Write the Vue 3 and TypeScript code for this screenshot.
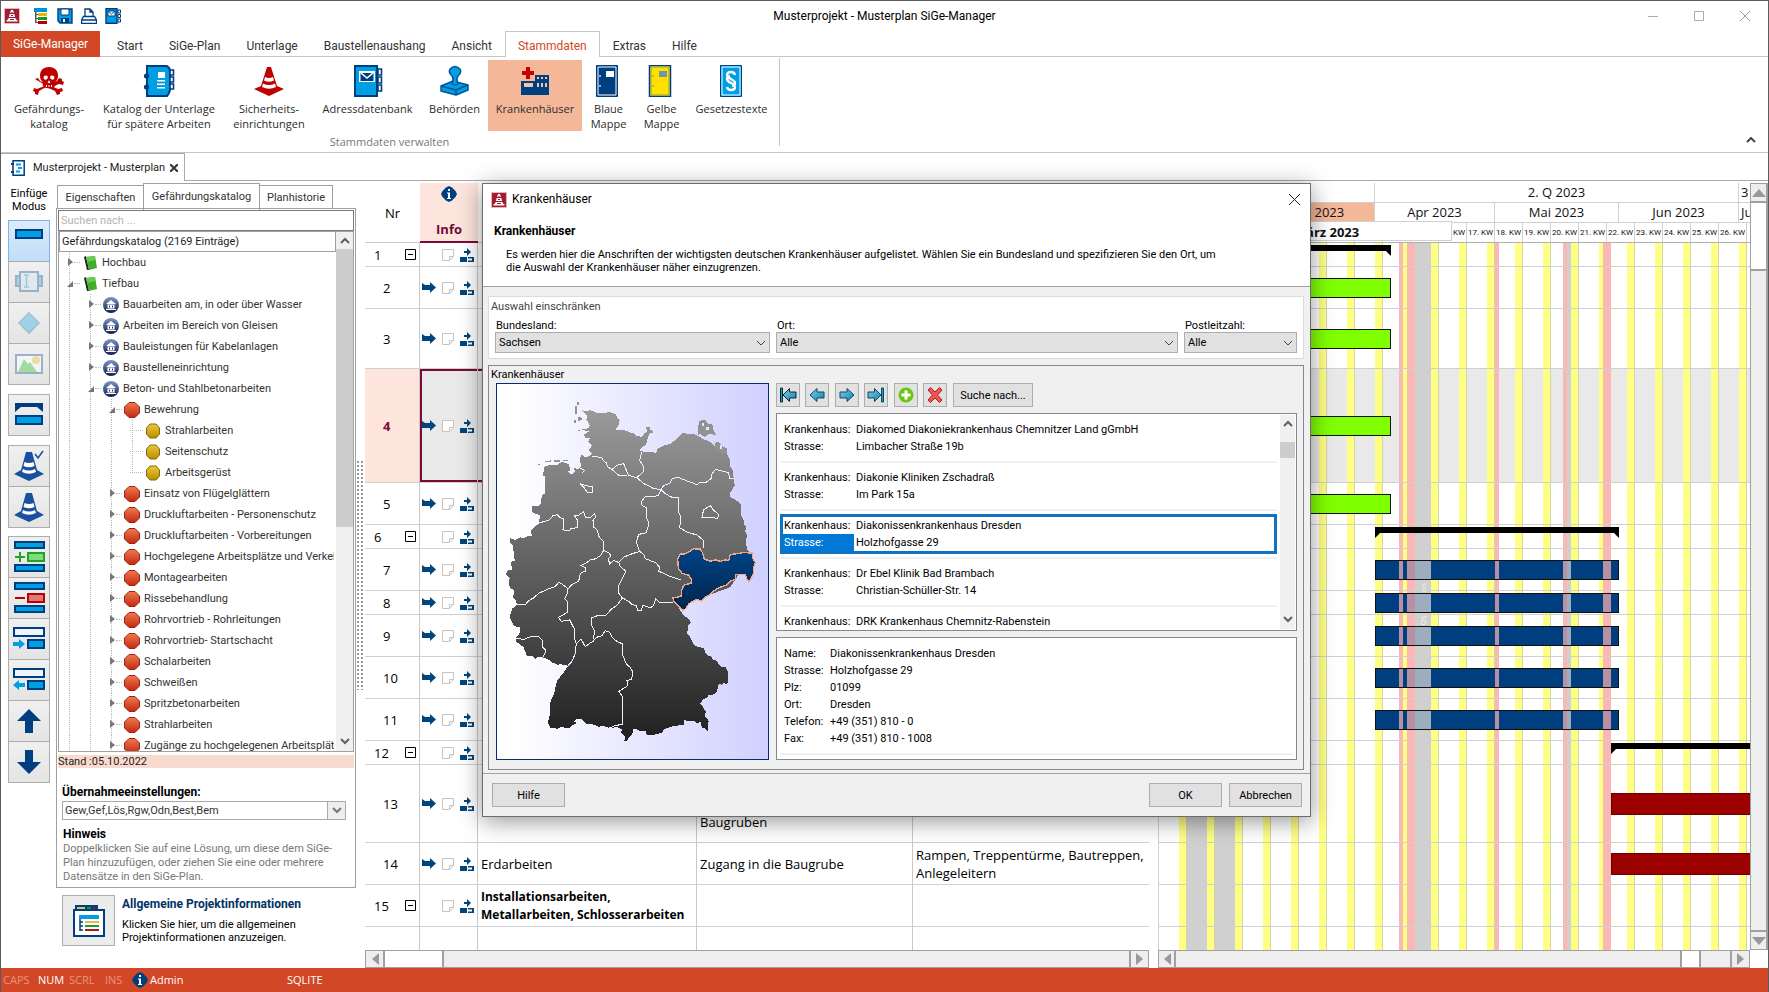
<script setup lang="ts">
import { ref } from 'vue'

interface RibbonItem { icon: string; lines: string[]; active?: boolean }
interface TreeNode { level: number; label: string; icon: string; open?: boolean; leaf?: boolean; last?: boolean }
interface PlanRow { nr: number; height: number; group?: boolean; selected?: boolean; cells?: string[]; low?: boolean; bar?: Bar }
interface Bar { kind: string; from: number; to: number }
interface Stripe { kind: string; day: number; days: number; text?: string }

const menu = ['Start', 'SiGe-Plan', 'Unterlage', 'Baustellenaushang', 'Ansicht', 'Stammdaten', 'Extras', 'Hilfe']
const activeMenu = ref('Stammdaten')

const ribbon: RibbonItem[] = [
  { icon: 'skull', lines: ['Gefährdungs-', 'katalog'] },
  { icon: 'catalog', lines: ['Katalog der Unterlage', 'für spätere Arbeiten'] },
  { icon: 'cone-red', lines: ['Sicherheits-', 'einrichtungen'] },
  { icon: 'address', lines: ['Adressdatenbank'] },
  { icon: 'stamp', lines: ['Behörden'] },
  { icon: 'hospital', lines: ['Krankenhäuser'], active: true },
  { icon: 'folder-blue', lines: ['Blaue', 'Mappe'] },
  { icon: 'folder-yellow', lines: ['Gelbe', 'Mappe'] },
  { icon: 'law', lines: ['Gesetzestexte'] },
]

const toolGroups: { icon: string; label: string; active?: boolean; dim?: boolean }[][] = [
  [
    { icon: 't-bar', label: 'Vorgang', active: true },
    { icon: 't-text', label: 'Text', dim: true },
    { icon: 't-diamond', label: 'Meilenstein', dim: true },
    { icon: 't-image', label: 'Bild', dim: true },
  ],
  [{ icon: 't-summary', label: 'Sammelvorgang' }],
  [{ icon: 't-cone-check', label: 'Maßnahme prüfen' }, { icon: 't-cone', label: 'Maßnahme' }],
  [
    { icon: 't-add', label: 'Zeile einfügen' },
    { icon: 't-remove', label: 'Zeile löschen' },
    { icon: 't-indent', label: 'Einrücken' },
    { icon: 't-outdent', label: 'Ausrücken' },
    { icon: 't-up', label: 'Nach oben' },
    { icon: 't-down', label: 'Nach unten' },
  ],
]

const panelTabs = ['Eigenschaften', 'Gefährdungskatalog', 'Planhistorie']
const panelTab = ref('Gefährdungskatalog')
const search = ref('')

const node = (level: number, label: string, icon: string, extra: Partial<TreeNode> = {}): TreeNode => ({ level, label, icon, ...extra })
const tree: TreeNode[] = [
  node(0, 'Hochbau', 'book'),
  node(0, 'Tiefbau', 'book', { open: true }),
  node(1, 'Bauarbeiten am, in oder über Wasser', 'house'),
  node(1, 'Arbeiten im Bereich von Gleisen', 'house'),
  node(1, 'Bauleistungen für Kabelanlagen', 'house'),
  node(1, 'Baustelleneinrichtung', 'house'),
  node(1, 'Beton- und Stahlbetonarbeiten', 'house', { open: true }),
  node(2, 'Bewehrung', 'octagon', { open: true }),
  node(3, 'Strahlarbeiten', 'coin', { leaf: true }),
  node(3, 'Seitenschutz', 'coin', { leaf: true }),
  node(3, 'Arbeitsgerüst', 'coin', { leaf: true, last: true }),
  ...[
    'Einsatz von Flügelglättern', 'Druckluftarbeiten - Personenschutz', 'Druckluftarbeiten - Vorbereitungen',
    'Hochgelegene Arbeitsplätze und Verkehrswege', 'Montagearbeiten', 'Rissebehandlung', 'Rohrvortrieb - Rohrleitungen',
    'Rohrvortrieb- Startschacht', 'Schalarbeiten', 'Schweißen', 'Spritzbetonarbeiten', 'Strahlarbeiten',
    'Zugänge zu hochgelegenen Arbeitsplätzen',
  ].map((t) => node(2, t, 'octagon')),
]

const green = (): Bar => ({ kind: 'green', from: 23, to: 58 })
const blue = (): Bar => ({ kind: 'blue', from: 54, to: 115 })
const red = (): Bar => ({ kind: 'red', from: 113, to: 160 })
const rows: PlanRow[] = [
  { nr: 1, height: 24, group: true, bar: { kind: 'sum', from: 23, to: 58 } },
  { nr: 2, height: 42, bar: green() },
  { nr: 3, height: 60, bar: green() },
  { nr: 4, height: 114, selected: true, bar: green() },
  { nr: 5, height: 42, bar: green() },
  { nr: 6, height: 24, group: true, bar: { kind: 'sum', from: 54, to: 115 } },
  { nr: 7, height: 42, bar: blue() },
  { nr: 8, height: 24, bar: blue() },
  { nr: 9, height: 42, bar: blue() },
  { nr: 10, height: 42, bar: blue() },
  { nr: 11, height: 42, bar: blue() },
  { nr: 12, height: 24, group: true, bar: { kind: 'sum', from: 113, to: 160 } },
  { nr: 13, height: 78, cells: ['', 'Baugruben', ''], low: true, bar: red() },
  { nr: 14, height: 42, cells: ['Erdarbeiten', 'Zugang in die Baugrube', 'Rampen, Treppentürme, Bautreppen, Anlegeleitern'], bar: red() },
  { nr: 15, height: 42, group: true, cells: ['Installationsarbeiten, Metallarbeiten, Schlosserarbeiten', '', ''] },
]

const DAY = 4
const span = (from: number, days: number) => ({ left: `${from * DAY}px`, width: `${days * DAY}px` })
const size = (days: number) => ({ flexBasis: `${days * DAY}px` })

const weekends: Stripe[] = Array.from({ length: 21 }, (_, i) => ({ kind: 'weekend', day: i * 7 + 5, days: 2 }))
const holidays: Stripe[] = [
  { kind: 'vac', day: 7, days: 5 },
  { kind: 'vac', day: 14, days: 5 },
  { kind: 'free', day: 60, days: 1 },
  { kind: 'free', day: 62, days: 2 },
  { kind: 'vac', day: 64, days: 4, text: 'Osterferien' },
  { kind: 'free', day: 84, days: 1 },
  { kind: 'free', day: 101, days: 1 },
  { kind: 'vac', day: 102, days: 1 },
  { kind: 'free', day: 111, days: 2 },
]
const inBar = (bar: Bar) => (bar.kind === 'blue' ? holidays.filter((h) => h.day >= bar.from && h.day + h.days <= bar.to) : [])

const quarters = [{ t: '', d: 54 }, { t: '2. Q 2023', d: 91 }, { t: '3', d: 10 }]
const months = [
  { t: '', d: 23 }, { t: 'März 2023', d: 31, now: true }, { t: 'Apr 2023', d: 30 },
  { t: 'Mai 2023', d: 31 }, { t: 'Jun 2023', d: 30 }, { t: 'Jul', d: 10 },
]
const weeks = Array.from({ length: 22 }, (_, i) => (i >= 10 && i < 21 ? `${i + 6}. KW` : ''))

const hospitals = [
  { name: 'Diakomed Diakoniekrankenhaus Chemnitzer Land gGmbH', street: 'Limbacher Straße 19b' },
  { name: 'Diakonie Kliniken Zschadraß', street: 'Im Park 15a' },
  { name: 'Diakonissenkrankenhaus Dresden', street: 'Holzhofgasse 29' },
  { name: 'Dr Ebel Klinik Bad Brambach', street: 'Christian-Schüller-Str. 14' },
  { name: 'DRK Krankenhaus Chemnitz-Rabenstein', street: '' },
]
const current = ref(2)
const details = [
  ['Name:', 'Diakonissenkrankenhaus Dresden'],
  ['Strasse:', 'Holzhofgasse 29'],
  ['Plz:', '01099'],
  ['Ort:', 'Dresden'],
  ['Telefon:', '+49 (351) 810 - 0'],
  ['Fax:', '+49 (351) 810 - 1008'],
]
const navButtons = [
  { icon: 'n-first', label: 'Erster' }, { icon: 'n-prev', label: 'Zurück' }, { icon: 'n-next', label: 'Weiter' },
  { icon: 'n-last', label: 'Letzter' }, { icon: 'n-add', label: 'Neu' }, { icon: 'n-del', label: 'Löschen' },
]

const germany = 'M335 120 348 124 360 120 385 130 405 128 420 126 438 134 440 144 448 150 445 165 436 178 455 180 470 182 480 188 492 190 500 198 515 200 522 190 530 184 528 172 538 172 540 180 548 182 546 190 538 190 532 205 528 222 515 232 508 240 520 245 545 246 558 248 562 236 580 226 592 224 605 218 620 205 640 187 652 192 665 190 685 198 700 208 716 213 730 225 740 235 755 248 770 250 776 262 780 275 780 290 786 295 790 325 793 345 778 370 778 380 792 386 800 392 813 405 812 435 820 450 820 462 828 470 824 482 830 495 826 515 832 540 845 550 780 650 640 700 625 712 640 735 652 742 662 755 652 765 654 780 648 784 660 800 670 822 680 828 700 832 705 845 715 855 722 856 728 866 740 870 744 880 755 890 766 890 773 905 773 935 768 940 758 936 755 942 746 938 740 962 728 972 715 972 710 980 700 985 688 998 698 1005 702 1018 708 1020 703 1035 715 1050 712 1080 704 1072 695 1070 690 1052 680 1058 675 1052 640 1048 640 1062 620 1064 600 1068 580 1075 575 1085 565 1088 550 1092 530 1093 525 1080 510 1080 500 1076 488 1074 486 1090 478 1096 470 1110 460 1112 466 1098 452 1086 455 1075 440 1068 420 1072 400 1066 385 1067 365 1060 350 1060 335 1046 318 1044 310 1052 322 1056 305 1064 300 1070 285 1072 275 1066 262 1073 240 1072 233 1055 236 1040 240 1030 238 1000 242 988 252 968 255 950 260 930 280 905 293 885 270 880 262 882 245 875 238 868 225 862 205 858 195 864 185 855 170 856 160 830 148 820 138 815 138 800 150 785 148 770 132 766 125 755 118 738 125 715 140 702 136 690 128 680 132 660 118 650 115 635 118 622 106 612 112 600 125 600 122 575 133 570 130 545 128 525 118 516 120 504 135 508 150 500 160 504 172 498 185 495 180 482 190 472 205 460 210 435 195 430 185 425 185 408 210 405 215 375 224 370 225 320 218 315 222 290 240 284 258 286 275 275 295 282 300 300 292 305 304 312 315 304 310 292 325 298 332 288 328 265 335 252 345 262 360 256 365 250 354 240 366 226 354 214 360 202 345 204 340 194 355 184 334 178 355 174 358 165 348 148 352 140Z'
const saxony = 'M622 565 630 551 645 550 655 545 670 535 690 536 697 548 702 566 720 572 735 568 750 573 765 568 775 570 780 552 800 550 820 546 845 548 848 565 855 576 850 590 850 608 838 632 832 630 824 612 795 612 796 626 780 632 770 643 755 648 740 655 728 662 715 675 700 683 694 692 680 686 665 693 655 700 648 712 638 720 625 706 612 695 607 682 632 678 634 660 640 644 662 638 664 628 655 614 635 608 624 594Z'
const borders = [
  'M365 258 380 260 395 263 400 272 408 278 412 290 425 298 440 285 460 280 468 300 474 314 490 320 500 322 518 305 520 290 508 270 515 245',
  'M425 298 435 306 445 315 470 315',
  'M500 322 520 340 535 347 550 355 572 358 580 346 600 338 606 324 625 322 650 332 680 343 690 336 708 336 722 325 724 312 735 298 755 302 775 308 778 325 792 326',
  'M572 358 564 376 540 380 525 378 512 396 516 406 528 412 528 440 536 460 528 487 505 492 498 515 508 543',
  'M572 358 585 370 602 380 626 382 625 425 632 440 628 472 650 485 680 494 700 510 700 532',
  'M695 440 700 418 720 406 730 420 745 432 742 445 720 440Z',
  'M205 458 235 450 248 436 260 433 270 442 280 446 278 478 296 482 302 474 322 472 322 450 312 435 325 434 340 424 345 440 360 442 372 430 376 440 368 450 370 470 382 480 384 496 400 515 400 540',
  'M400 540 414 546 422 556 414 566 418 580 430 570 445 576 460 560 485 550 508 543',
  'M400 540 392 554 376 565 360 568 350 576 333 585 345 592 345 602 330 608 325 632 305 642 293 655',
  'M140 702 165 702 175 690 190 682 205 668 235 655 255 648 265 635 280 644 293 655 290 670 283 685 293 695 292 725 265 740 272 752 298 748 312 775 312 800 318 820 314 850 305 872 293 885',
  'M138 803 160 806 185 797 205 797 216 810 218 830 227 840 218 860',
  'M445 576 450 588 466 602 458 620 445 645 445 668 456 682 440 704 425 714 405 735 385 734 362 742 364 765 374 782 368 805',
  'M456 682 475 692 485 702 498 705 503 720 512 720 518 704 540 712 550 704 556 684 568 696 607 695',
  'M508 543 520 552 525 565 555 576 568 590 565 602 600 618 632 628',
  'M318 820 332 805 345 828 355 820 368 812 378 800 395 795 405 780 418 785 425 800 440 812 457 820 458 855 468 880 480 890 488 905 484 925 470 930 472 945 445 962 455 975 457 1000 457 1060 435 1064 415 1072',
  'M328 340 345 346 368 350 366 366 350 366 342 352Z',
  'M325 292 343 300 336 308',
]
</script>

<template>
  <div class="app">
    <svg class="sprite" width="0" height="0" aria-hidden="true">
      <defs>
        <linearGradient id="g-red" x1="0" y1="0" x2="0" y2="1"><stop offset="0" stop-color="#f07a4c" /><stop offset="1" stop-color="#c22a10" /></linearGradient>
        <linearGradient id="g-gold" x1="0" y1="0" x2="0" y2="1"><stop offset="0" stop-color="#ecc83c" /><stop offset="1" stop-color="#b98d00" /></linearGradient>
        <linearGradient id="g-house" x1="0" y1="0" x2="0" y2="1"><stop offset="0" stop-color="#7d93c8" /><stop offset="1" stop-color="#10204c" /></linearGradient>
        <linearGradient id="g-arrow" x1="0" y1="0" x2="1" y2="1"><stop offset="0" stop-color="#7fd0ea" /><stop offset="1" stop-color="#1580a8" /></linearGradient>
        <linearGradient id="g-map" x1="0" y1="0" x2="0" y2="1"><stop offset="0" stop-color="#9a9a9a" /><stop offset="1" stop-color="#202020" /></linearGradient>
        <linearGradient id="g-sax" x1="0" y1="0" x2="0" y2="1"><stop offset="0" stop-color="#004487" /><stop offset="1" stop-color="#00244c" /></linearGradient>
      </defs>
      <symbol id="logo" viewBox="0 0 16 16"><path d="M0 0h16v16H0z" fill="#efb3b3" /><path d="M1 1h14v14H1z" fill="#a01d35" /><path d="M7 2h2l1 3H6zM5.700 6h4.600l.8 3H5zM4.600 10h6.800l.5 1.600 1.600.6v1.300H2.500v-1.300l1.600-.6z" fill="#fff" /><path d="M7.300 4h1.400v1H7.300zM7 7h2v1H7zM6 11h4v1H6z" fill="#a01d35" /></symbol>
      <symbol id="q-tree" viewBox="0 0 16 16"><path d="M1 0h13v4H1z" fill="#0092d8" /><path d="M2 4h1.500v2H5v1H3.500v3H5v1H3.500v3H5v1H2z" fill="#555" /><path d="M5 5h9v3H5z" fill="#e9b310" /><path d="M5 9h9v3H5z" fill="#13a013" /><path d="M5 13h9v3H5z" fill="#b80000" /></symbol>
      <symbol id="q-save" viewBox="0 0 16 16"><path d="M1 1h14v14H3l-2-2z" fill="#009ee3" stroke="#003f7f" stroke-width="1.400" /><path d="M4 1h8v6H4z" fill="#fff" stroke="#003f7f" /><path d="M4 10h8v5H4z" fill="#003f7f" /><path d="M6 11h2v3H6z" fill="#fff" /></symbol>
      <symbol id="q-print" viewBox="0 0 16 16"><path d="M4 8V1h5l3 3v4M9 1v3h3M2.500 8.500h11l2 3.500v3.500H.6V12zM1 12h14" fill="#fff" stroke="#003f7f" stroke-width="1.300" /></symbol>
      <symbol id="q-book" viewBox="0 0 16 16"><path d="M1 .7h11v14.600H1z" fill="#009ee3" stroke="#003f7f" stroke-width="1.400" /><path d="M3 3h7v5H3z" fill="#fff" stroke="#003f7f" /><path d="m3 3 3.500 3L10 3" fill="none" stroke="#003f7f" /><path d="M13 2h2.500v3H13zM13 6.500h2.500v3H13zM13 11h2.500v3H13z" fill="#fff" stroke="#003f7f" /></symbol>
      <symbol id="q-doc" viewBox="0 0 16 16"><path d="M3 .8h11.200v14.400H3z" fill="#fff" stroke="#003f7f" stroke-width="1.500" /><path d="M6 3.500h5v2H6zM8 7h4v2H8zM6 10.500h4v2H6z" fill="#009ee3" /><path d="M1 3h3v2H1zM1 11h3v2H1z" fill="#003f7f" /></symbol>
      <symbol id="skull" viewBox="0 0 32 32"><g fill="#be0000"><path d="M16 2c6 0 9 3.600 9 8.600 0 3-.8 4.800-2.600 6.200l-.4 4.200c-1.200 1.600-3.200 2.200-6 2.200S11.200 22.600 10 21l-.4-4.200C7.800 15.400 7 13.600 7 10.600 7 5.600 10 2 16 2z" /><path d="m2 14 3-1 2 3 18 8 4-1 1 3-3 1 0 2-3 1-2-4-9-4-7 4-1 4-3-1v-2l-2-1 1-3 3 1 20-8 2-3 3 1v2l2 1-1 3-4-1-9 4" /></g><path d="M11 11c2-1 3.500-.6 4 1-.4 2-1.600 3-3.400 2.600C10.600 14 10.400 12 11 11zM21 11c-2-1-3.500-.6-4 1 .4 2 1.600 3 3.400 2.600C21.400 14 21.600 12 21 11zM16 15l1.400 3h-2.800z" fill="#fff" /><path d="M13 20h1v2h-1zM15.500 20h1v2h-1zM18 20h1v2h-1z" fill="#fff" /></symbol>
      <symbol id="catalog" viewBox="0 0 32 32"><path d="M4 1h20q3 2 3 5v19q-1 4-3 6H4z" fill="#009ee3" stroke="#003f7f" stroke-width="2" /><path d="M15 7h7v6h-7zM14 15h8v1.600h-8zM14 18.500h8v1.600h-8zM14 22h8v1.600h-8z" fill="#fff" /><g fill="#fff" stroke="#003f7f" stroke-width="1.600"><path d="M27 5h3.500v5H27zM27 12h3.500v5H27zM27 19h3.500v5H27z" /></g><g fill="#003f7f"><circle cx="3.500" cy="11" r="2.600" /><circle cx="3.500" cy="22" r="2.600" /></g></symbol>
      <symbol id="cone-red" viewBox="0 0 32 32"><path d="M14 2h4l6 19 7 3-15 7-15-7 7-3z" fill="#be0000" /><path d="M12 12q4 2 8 0l1 3.500q-5 2.500-10 0zM10 18.500q6 3 12 0l1 3.500q-7 3.500-14 0z" fill="#fff" /></symbol>
      <symbol id="address" viewBox="0 0 32 32"><path d="M3 1h22v30H3z" fill="#009ee3" stroke="#003f7f" stroke-width="2" /><path d="M7 6h16v11H7z" fill="#fff" /><path d="M8.500 8h13v8h-13z" fill="#003f7f" /><path d="m9 8 6 5 6-5" fill="none" stroke="#fff" stroke-width="1.600" /><path d="M26 4h3.500v6H26zM26 12h3.500v6H26zM26 20h3.500v6H26z" fill="#fff" stroke="#003f7f" stroke-width="1.600" /></symbol>
      <symbol id="stamp" viewBox="0 0 32 32"><g fill="#009ee3" stroke="#00559a" stroke-width="1.500" stroke-linejoin="round"><path d="m2 21 12-5 15 4v5l-12 5-15-4z" /><path d="m2 21 15 4 12-5M17 25v5" fill="none" /><path d="M13 19q2-5 0-8-4-3-2-7 5-5 10 0 2 4-2 7-2 3 0 8-3 2-6 0z" /></g></symbol>
      <symbol id="hospital" viewBox="0 0 32 32"><path d="M7 2h4v4h4v4h-4v4H7v-4H3V6h4z" fill="#c40000" /><path d="M2 16h14v-6h14v20H2z" fill="#003f7f" /><path d="M5 18h9v4H5zM18 12h2v2h-2zM22 12h2v2h-2zM26 12h2v2h-2zM18 18h2v4h-2zM22 18h2v4h-2zM26 18h2v4h-2z" fill="#f0c4b0" /></symbol>
      <symbol id="folder-blue" viewBox="2 0 32 32"><path d="M5.500.5h21v31h-21z" fill="#003f7f" stroke="#003f7f" /><path d="M7 2h18v28H7z" fill="none" stroke="#fff" /><path d="M15 6h8v6h-8z" fill="#fff" /><path d="M8 10h2v2H8zM8 20h2v2H8z" fill="#9ab4cc" /></symbol>
      <symbol id="folder-yellow" viewBox="2 0 32 32"><path d="M5.500.5h21v31h-21z" fill="#ffe000" stroke="#003f7f" stroke-width="1.500" /><path d="M7 2h18v28H7z" fill="none" stroke="#8b9c5c" /><path d="M15 6h8v6h-8z" fill="#6f97a8" /><path d="M8 10h2v2H8zM8 20h2v2H8z" fill="#c9b820" /></symbol>
      <symbol id="law" viewBox="1 0 32 32"><path d="M5.500.5h21v31h-21z" fill="#009ee3" stroke="#003f7f" /><path d="M7 2h18v28H7z" fill="none" stroke="#fff" /><path d="M20 10c-.4-2-2-3-4-3-2.400 0-4 1.200-4 3 0 4 8 4 8 8 0 1.600-1.400 2.600-3 2.800M12 22c.4 2 2 3 4 3 2.400 0 4-1.200 4-3 0-4-8-4-8-8 0-1.600 1.400-2.600 3-2.800" fill="none" stroke="#fff" stroke-width="2.400" /></symbol>
      <symbol id="info" viewBox="0 0 16 16"><path d="M8 0l3 1.500L14.500 5 16 8l-1.500 3-3.500 3.500L8 16l-3-1.500L1.500 11 0 8l1.500-3L5 1.500z" fill="#003f7f" /><path d="M7 3h2v2H7zM6 6.500h3V12h1v1H6v-1h1V7.500H6z" fill="#fff" /></symbol>
      <symbol id="t-bar" viewBox="0 0 32 32"><path d="M3 5h26v8H3z" fill="#009ee3" stroke="#003f7f" stroke-width="2" /></symbol>
      <symbol id="t-text" viewBox="0 0 32 32"><path d="M3 10h26v10H3z" fill="#6cb8e0" stroke="#4c7ba8" stroke-width="2" /><path d="M7 6h18v19H7z" fill="#dbe8f0" stroke="#4c7ba8" stroke-width="2" /><path d="M11 9h5M13.500 9v12M11 21h5" stroke="#43b0e0" stroke-width="1.500" /></symbol>
      <symbol id="t-diamond" viewBox="0 0 32 32"><path d="m16 6 10 10-10 10L6 16z" fill="#5cb9e2" stroke="#5f97bd" stroke-width="1.600" /></symbol>
      <symbol id="t-image" viewBox="0 0 32 32"><path d="M3 7h26v18H3z" fill="#fff" stroke="#4c7ba8" stroke-width="2" /><path d="m5 24 6-13 4 5 2-2 7 10z" fill="#5ccf5c" /><circle cx="23" cy="12" r="4" fill="#f3cf5c" /></symbol>
      <symbol id="t-summary" viewBox="0 0 32 32"><path d="M2 4h28v9l-6-5H8l-6 5z" fill="#003f7f" /><path d="M3 17h26v8H3z" fill="#009ee3" stroke="#003f7f" stroke-width="2" /></symbol>
      <symbol id="t-cone" viewBox="0 0 32 32"><path d="M13 2h6l5 18 7 4-15 7-15-7 7-4z" fill="#1b4fa0" /><path d="M11.500 12q4.500 2 9 0l1 4q-5.500 2.500-11 0zM10 19q6 3 12 0l1 3q-7 3.500-14 0z" fill="#fff" /></symbol>
      <symbol id="t-cone-check" viewBox="0 0 32 32"><path d="M13 2h6l5 18 7 4-15 7-15-7 7-4z" fill="#1b4fa0" /><path d="M11.500 12q4.500 2 9 0l1 4q-5.500 2.500-11 0zM10 19q6 3 12 0l1 3q-7 3.500-14 0z" fill="#fff" /><path d="m22 4 3 4 5-7" fill="none" stroke="#1b4fa0" stroke-width="1.600" /></symbol>
      <symbol id="t-add" viewBox="0 0 32 32"><g fill="#009ee3" stroke="#003f7f" stroke-width="2"><path d="M2 1h29v6H2zM2 24h29v6H2z" /></g><path d="M15 12h16v8H15z" fill="#7ddc7d" stroke="#1fa51f" stroke-width="2" /><path d="M2 16h10M7 11v10" stroke="#1fa51f" stroke-width="2" /></symbol>
      <symbol id="t-remove" viewBox="0 0 32 32"><g fill="#009ee3" stroke="#003f7f" stroke-width="2"><path d="M2 1h29v6H2zM2 24h29v6H2z" /></g><path d="M15 12h16v8H15z" fill="#e07878" stroke="#b80000" stroke-width="2" /><path d="M2 16h10" stroke="#b80000" stroke-width="2" /></symbol>
      <symbol id="t-indent" viewBox="0 0 32 32"><path d="M1 5h30v8H1z" fill="#eef4fa" stroke="#003f7f" stroke-width="2" /><path d="M15 17h16v8H15z" fill="#009ee3" stroke="#003f7f" stroke-width="2" /><path d="M0 19h6v-3l6 5-6 5v-3H0z" fill="#009ee3" /></symbol>
      <symbol id="t-outdent" viewBox="0 0 32 32"><path d="M1 5h30v8H1z" fill="#eef4fa" stroke="#003f7f" stroke-width="2" /><path d="M15 17h16v8H15z" fill="#009ee3" stroke="#003f7f" stroke-width="2" /><path d="M12 19H6v-3l-6 5 6 5v-3h6z" fill="#009ee3" /></symbol>
      <symbol id="t-up" viewBox="0 0 32 32"><path d="m16 4 12 12h-8v12h-8V16H4z" fill="#003f7f" /></symbol>
      <symbol id="t-down" viewBox="0 0 32 32"><path d="M16 28 4 16h8V4h8v12h8z" fill="#003f7f" /></symbol>
      <symbol id="book" viewBox="0 0 16 16"><path d="m2 2 3 13h2L4 1z" fill="#222" /><path d="m4 2 9-1 2 12-8 2z" fill="#3fae2a" /><path d="m4 2 9-1 .6 4-8.400 2z" fill="#6cc94e" /></symbol>
      <symbol id="house" viewBox="0 0 16 16"><circle cx="8" cy="8" r="8" fill="url(#g-house)" /><path d="m8 3 5 4H3zM4.500 7.500h7v4h-7zM3 12h10v1H3z" fill="#fff" /><path d="M6 8.500h1v2H6zM9 8.500h1v2H9z" fill="#24386e" /></symbol>
      <symbol id="octagon" viewBox="0 0 16 16"><path d="M5 .5h6L15.500 5v6L11 15.500H5L.5 11V5z" fill="url(#g-red)" stroke="#9c2412" /></symbol>
      <symbol id="coin" viewBox="0 0 16 16"><path d="M5 1h6l3.500 4v6L11 15H5l-3.500-4V5z" fill="url(#g-gold)" stroke="#8a6a00" /></symbol>
      <symbol id="r-arrow" viewBox="0 0 14 12"><path d="M0 1 3 3h5V0l6 5.500L8 11V8H0z" fill="#00457c" /></symbol>
      <symbol id="r-note" viewBox="0 0 12 14"><path d="M.5 1.500h11v7l-4 4h-7z" fill="#fff" stroke="#c4c4c4" /><path d="M11.500 8.500h-4v4" fill="none" stroke="#c4c4c4" /></symbol>
      <symbol id="r-link" viewBox="0 0 14 14"><path d="M4 3h3V0l4 4-4 4V5H4zM0 9h7v5H0zM8 9h6v5H8z" fill="#00457c" /><path d="M8 10.500h4v2H8z" fill="#fff" /></symbol>
      <symbol id="n-prev" viewBox="0 0 18 18"><path d="M2 9 9 2.500V6h7v6H9v3.500z" fill="url(#g-arrow)" stroke="#0b4a62" /></symbol>
      <symbol id="n-next" viewBox="0 0 18 18"><path d="M16 9 9 2.500V6H2v6h7v3.500z" fill="url(#g-arrow)" stroke="#0b4a62" /></symbol>
      <symbol id="n-first" viewBox="0 0 18 18"><path d="M1.500 2h2v14h-2z" fill="#2596be" stroke="#062a3a" /><path d="m4 9 6.500-6.500V6H17v6h-6.500v3.500z" fill="url(#g-arrow)" stroke="#062a3a" /></symbol>
      <symbol id="n-last" viewBox="0 0 18 18"><path d="M14.500 2h2v14h-2z" fill="#2596be" stroke="#0b4a62" /><path d="M14 9 7.500 2.500V6H1v6h6.500v3.500z" fill="url(#g-arrow)" stroke="#0b4a62" /></symbol>
      <symbol id="n-add" viewBox="0 0 18 18"><circle cx="9" cy="9" r="7.500" fill="#6cc413" /><path d="M7.500 4.500h3v3h3v3h-3v3h-3v-3h-3v-3h3z" fill="#fff" /></symbol>
      <symbol id="n-del" viewBox="0 0 18 18"><path d="m2 4 2.500-2.500L9 6l4.500-4.500L16 4l-4.500 5 4.500 5-2.500 2.500L9 12l-4.500 4.500L2 14l4.500-5z" fill="#ee5555" stroke="#b01818" /></symbol>
      <symbol id="chev" viewBox="0 0 10 6"><path d="m1 1 4 4 4-4" fill="none" stroke="currentColor" /></symbol>
      <symbol id="project" viewBox="0 0 32 32"><path d="M2 0h23v6H2z" fill="#003f7f" /><path d="M4 2h8v2H4z" fill="#e2c64a" /><path d="M14 2h4v2h-4z" fill="#13a013" /><path d="M20 2h4v3h-4z" fill="#8a1038" /><path d="M1 5h30v26H1z" fill="#fff" stroke="#003f7f" stroke-width="2" /><path d="M6 10h20v4H6z" fill="#009ee3" /><path d="M7 14v12M7 17h3M7 21h3M7 25h3" stroke="#003f7f" stroke-width="1.500" fill="none" /><path d="M12 16h14v2H12z" fill="#e9b94a" /><path d="M12 20h14v2H12z" fill="#1a9e2e" /><path d="M12 24h14v2H12z" fill="#a81818" /></symbol>
    </svg>

    <header class="titlebar">
      <div class="quick">
        <svg class="i16 logo"><use href="#logo" /></svg>
        <button v-for="q in ['q-tree', 'q-save', 'q-print', 'q-book']" :key="q" class="bare" :aria-label="q.slice(2)"><svg class="i16"><use :href="'#' + q" /></svg></button>
      </div>
      <h1>Musterprojekt - Musterplan SiGe-Manager</h1>
      <div class="winbtns">
        <button class="bare" aria-label="Minimieren"><svg width="12" height="12"><path d="M1 6.500h10" stroke="#aaa" /></svg></button>
        <button class="bare" aria-label="Maximieren"><svg width="12" height="12"><path d="M1.500 1.500h9v9h-9z" stroke="#aaa" fill="none" /></svg></button>
        <button class="bare" aria-label="Schließen"><svg width="12" height="12"><path d="m1 1 10 10M11 1 1 11" stroke="#999" /></svg></button>
      </div>
    </header>

    <nav class="menubar">
      <button class="appmenu">SiGe-Manager</button>
      <button v-for="m in menu" :key="m" class="menutab" :class="{ active: m === activeMenu }" @click="activeMenu = m">{{ m }}</button>
    </nav>

    <section class="ribbon">
      <div class="ribbon-group">
        <div class="ribbon-items">
          <button v-for="r in ribbon" :key="r.icon" class="ribbon-item" :class="{ active: r.active }">
            <svg class="i32"><use :href="'#' + r.icon" /></svg>
            <span v-for="l in r.lines" :key="l">{{ l }}</span>
          </button>
        </div>
        <div class="ribbon-title">Stammdaten verwalten</div>
      </div>
      <button class="bare collapse" aria-label="Menüband reduzieren"><svg width="10" height="6"><path d="m1 5 4-4 4 4" fill="none" stroke="#444" stroke-width="2" /></svg></button>
    </section>

    <div class="doctabs">
      <div class="doctab">
        <svg class="i16"><use href="#q-doc" /></svg>
        <span>Musterprojekt - Musterplan</span>
        <button class="bare" aria-label="Tab schließen"><svg width="8" height="8"><path d="m0 0 8 8M8 0 0 8" stroke="#333" stroke-width="2" /></svg></button>
      </div>
    </div>

    <main class="main">
      <aside class="tools">
        <div class="tools-title">Einfüge<br />Modus</div>
        <div v-for="(g, i) in toolGroups" :key="i" class="toolgroup">
          <button v-for="t in g" :key="t.icon" class="tool" :class="{ active: t.active, dim: t.dim }" :aria-label="t.label"><svg class="i32"><use :href="'#' + t.icon" /></svg></button>
        </div>
      </aside>

      <section class="side">
        <div class="paneltabs">
          <button v-for="p in panelTabs" :key="p" :class="{ active: p === panelTab }" @click="panelTab = p">{{ p }}</button>
        </div>
        <div class="panel">
          <input v-model="search" class="search" type="text" placeholder="Suchen nach ..." aria-label="Suchen nach" />
          <div class="treebox">
            <div class="treecol">
              <div class="treehead">Gefährdungskatalog (2169 Einträge)</div>
              <ul class="tree">
                <li v-for="(n, i) in tree" :key="i">
                  <span v-for="l in n.level + 1" :key="l" class="guide" :class="{ branch: l === n.level + 1, half: n.last && l === n.level + 1 }">
                    <svg v-if="l === n.level + 1 && !n.leaf" width="7" height="9"><path :d="n.open ? 'M6 2v6H0z' : 'M1 0l5 4-5 4z'" fill="#777" /></svg>
                  </span>
                  <svg class="i16"><use :href="'#' + n.icon" /></svg>
                  <span class="label">{{ n.label }}</span>
                </li>
              </ul>
            </div>
            <div class="vscroll">
              <svg class="chev"><path d="m1 6 4-4 4 4" /></svg>
              <div class="thumb"></div>
              <svg class="chev"><path d="m1 2 4 4 4-4" /></svg>
            </div>
          </div>
          <div class="stand">Stand :05.10.2022</div>
          <div class="settings">
            <label for="takeover"><b>Übernahmeeinstellungen:</b></label>
            <div class="combo">
              <select id="takeover"><option>Gew,Gef,Lös,Rgw,Odn,Best,Bem</option></select>
              <span class="combo-btn"><svg width="10" height="7"><path d="m1 1 4 4 4-4" fill="none" stroke="#777" stroke-width="2" /></svg></span>
            </div>
            <b class="hint-title">Hinweis</b>
            <p>Doppelklicken Sie auf eine Lösung, um diese dem SiGe-Plan hinzuzufügen, oder ziehen Sie eine oder mehrere Datensätze in den SiGe-Plan.</p>
          </div>
        </div>
        <div class="project">
          <button aria-label="Allgemeine Projektinformationen"><svg class="i32"><use href="#project" /></svg></button>
          <div>
            <b>Allgemeine Projektinformationen</b>
            <p>Klicken Sie hier, um die allgemeinen Projektinformationen anzuzeigen.</p>
          </div>
        </div>
      </section>

      <div class="splitter"></div>

      <section class="plan">
        <div class="plan-scroll">
          <table>
            <colgroup><col class="c-nr" /><col class="c-info" /><col class="c-a" /><col class="c-b" /><col /></colgroup>
            <thead>
              <tr><th>Nr</th><th class="info-head"><svg class="i16"><use href="#info" /></svg><span>Info</span></th><th></th><th></th><th></th></tr>
            </thead>
            <tbody>
              <tr v-for="r in rows" :key="r.nr" :class="{ selected: r.selected, group: r.group, low: r.low }" :style="{ height: r.height + 'px' }">
                <td class="nr"><div><span>{{ r.nr }}</span><svg v-if="r.group" width="11" height="11"><path d="M.5.5h10v10H.5zM3 5.500h5" fill="none" stroke="#000" /></svg></div></td>
                <td class="icons"><div>
                  <svg class="ra"><use v-if="!r.group" href="#r-arrow" /></svg>
                  <svg class="rn"><use href="#r-note" /></svg>
                  <svg class="rl"><use href="#r-link" /></svg>
                </div></td>
                <td v-for="c in 3" :key="c">{{ r.cells ? r.cells[c - 1] : '' }}</td>
              </tr>
              <tr class="rest"><td></td><td></td><td></td><td></td><td></td></tr>
            </tbody>
          </table>
        </div>
        <div class="hscroll">
          <span class="hs-btn"><svg width="8" height="12"><path d="M8 0v12L1 6z" fill="#999" /></svg></span>
          <span class="hs-thumb"></span>
          <span class="hs-space"></span>
          <span class="hs-btn"><svg width="8" height="12"><path d="M0 0v12l7-6z" fill="#999" /></svg></span>
        </div>
      </section>

      <section class="gantt">
        <div class="gantt-view">
          <div class="scale"><span v-for="(q, i) in quarters" :key="i" :style="size(q.d)">{{ q.t }}</span></div>
          <div class="scale"><span v-for="(m, i) in months" :key="i" :class="{ now: m.now }" :style="size(m.d)">{{ m.t }}</span></div>
          <div class="scale weeks"><span v-for="(w, i) in weeks" :key="i" :style="size(7)">{{ w }}</span></div>
          <div class="month-tip">März 2023</div>
          <div class="chart">
            <div class="stripes">
              <span v-for="(s, i) in weekends" :key="'w' + i" class="stripe weekend" :style="span(s.day, s.days)"></span>
              <span v-for="(s, i) in holidays" :key="'h' + i" class="stripe" :class="s.kind" :style="span(s.day, s.days)"><i v-if="s.text">{{ s.text }}</i></span>
            </div>
            <div v-for="r in rows" :key="r.nr" class="lane" :class="{ selected: r.selected }" :style="{ height: r.height + 'px' }">
              <div v-if="r.bar" class="bar" :class="r.bar.kind" :style="span(r.bar.from, r.bar.to - r.bar.from)">
                <span v-for="(h, i) in inBar(r.bar)" :key="i" class="over" :class="h.kind" :style="span(h.day - r.bar.from, h.days)"></span>
              </div>
            </div>
            <div class="lane tail"></div>
          </div>
        </div>
        <div class="hscroll">
          <span class="hs-btn edge"><svg width="8" height="12"><path d="M8 0v12L1 6z" fill="#999" /></svg></span>
          <span class="hs-space"></span>
          <span class="hs-thumb small"></span>
          <span class="hs-gap"></span>
          <span class="hs-btn"><svg width="8" height="12"><path d="M0 0v12l7-6z" fill="#999" /></svg></span>
        </div>
      </section>

      <div class="vs">
        <span class="vs-btn"><svg width="14" height="8"><path d="m7 0 7 8H0z" fill="#999" /></svg></span>
        <span class="vs-thumb"></span>
        <span class="vs-space"></span>
        <span class="vs-btn"><svg width="14" height="8"><path d="M0 0h14L7 8z" fill="#999" /></svg></span>
      </div>
    </main>

    <footer class="status">
      <span class="s-caps off">CAPS</span><span class="s-num">NUM</span><span class="s-scrl off">SCRL</span><span class="s-ins off">INS</span>
      <svg class="i16"><use href="#info" /></svg><span class="s-user">Admin</span><span>SQLITE</span>
    </footer>

    <div class="dialog" role="dialog" aria-labelledby="dlg-title">
      <div class="dlg-top">
        <div class="dlg-caption">
          <svg class="i16"><use href="#logo" /></svg><span id="dlg-title">Krankenhäuser</span>
          <button class="bare" aria-label="Dialog schließen"><svg width="11" height="11"><path d="m0 0 11 11M11 0 0 11" stroke="#222" /></svg></button>
        </div>
        <h2>Krankenhäuser</h2>
        <p>Es werden hier die Anschriften der wichtigsten deutschen Krankenhäuser aufgelistet. Wählen Sie ein Bundesland und spezifizieren Sie den Ort, um die Auswahl der Krankenhäuser näher einzugrenzen.</p>
      </div>
      <div class="dlg-body">
        <fieldset class="filter">
          <div class="filter-title">Auswahl einschränken</div>
          <div class="fields">
            <div><label for="land">Bundesland:</label><div class="drop"><select id="land"><option>Sachsen</option></select><svg width="10" height="6"><use href="#chev" /></svg></div></div>
            <div><label for="ort">Ort:</label><div class="drop"><select id="ort"><option>Alle</option></select><svg width="10" height="6"><use href="#chev" /></svg></div></div>
            <div><label for="plz">Postleitzahl:</label><div class="drop"><select id="plz"><option>Alle</option></select><svg width="10" height="6"><use href="#chev" /></svg></div></div>
          </div>
        </fieldset>
        <div class="result">
          <div class="result-title">Krankenhäuser</div>
          <div class="result-grid">
            <div class="map">
              <svg viewBox="80 42 813 1122" preserveAspectRatio="none" shape-rendering="crispEdges">
                <path :d="germany" fill="url(#g-map)" />
                <path d="M320 96h6v10h-6zM314 108h6v24h-6zM322 140l10 2 4 8-12 2zM324 180h4v4h-4zM312 150h4v8h-4zM682 172l6-20 16-4 8 12 14 2 2 16 8 16-20-2-14 8-12-8-8 2zM736 214l12 4 10 12 12 4v14l-14 6-12-12-10-10zM225 274l18-4v4zM250 270h20v4h-20zM278 268h14v4h-14zM202 280h6v4h-6z" fill="#929292" />
                <path d="M694 158h8v10h-8zM708 172h8v8h-8zM748 226h8v10h-8z" fill="#e6e6ff" />
                <path v-for="(b, i) in borders" :key="i" :d="b" fill="none" stroke="#f2f2ff" stroke-width="3" />
                <path :d="saxony" fill="url(#g-sax)" stroke="#f0a888" stroke-width="4" />
              </svg>
            </div>
            <div class="pane">
              <div class="nav">
                <div class="navset">
                  <button v-for="n in navButtons" :key="n.icon" class="navbtn" :aria-label="n.label"><svg width="18" height="18"><use :href="'#' + n.icon" /></svg></button>
                </div>
                <button class="find">Suche nach...</button>
              </div>
              <div class="list">
                <div class="items">
                  <div v-for="(h, i) in hospitals" :key="h.name" class="item" :class="{ current: i === current }" @click="current = i">
                    <dl><dt>Krankenhaus:</dt><dd>{{ h.name }}</dd><template v-if="h.street"><dt class="st">Strasse:</dt><dd>{{ h.street }}</dd></template></dl>
                  </div>
                </div>
                <div class="vscroll list-scroll">
                  <svg class="chev"><path d="m1 6 4-4 4 4" /></svg>
                  <div class="thumb"></div>
                  <svg class="chev"><path d="m1 2 4 4 4-4" /></svg>
                </div>
              </div>
              <div class="details">
                <dl><template v-for="d in details" :key="d[0]"><dt>{{ d[0] }}</dt><dd>{{ d[1] }}</dd></template></dl>
              </div>
            </div>
          </div>
        </div>
      </div>
      <div class="dlg-foot">
        <button>Hilfe</button><span></span><button>OK</button><button>Abbrechen</button>
      </div>
    </div>
  </div>
</template>

<style>
body { margin: 0; background: #fff; }
</style>

<style scoped>
* { box-sizing: border-box; }
.app { position: relative; height: 100vh; display: flex; flex-direction: column; overflow: hidden; border: 1px solid #5c5c5c; border-bottom: 0; background: #fff; color: #1e1e1e; font: 11px/14px "Open Sans", "Noto Sans", sans-serif; }
.sprite { position: absolute; }
button, input, select { font: inherit; color: inherit; margin: 0; padding: 0; }
button { cursor: default; }
svg { display: block; flex: none; }
h1, h2, p, dl, dd, ul { margin: 0; padding: 0; }
.i16 { width: 16px; height: 16px; }
.i32 { width: 32px; height: 32px; }
.bare { border: 0; background: none; display: flex; }

.titlebar { height: 30px; flex: none; display: grid; grid-template-columns: 1fr auto 1fr; align-items: center; padding: 0 3px; font-family: Roboto, sans-serif; }
.quick { display: flex; gap: 8px; }
.logo { margin-right: 5px; }
.titlebar h1 { font-size: 12px; font-weight: 400; color: #000; }
.winbtns { display: flex; gap: 34px; justify-content: flex-end; padding-right: 14px; }

.menubar { height: 26px; flex: none; display: flex; border-bottom: 1px solid #c6c6c6; font-family: Roboto, sans-serif; }
.appmenu { width: 99px; height: 26px; border: 0; background: #d24726; color: #fff; font-size: 12px; margin-right: 4px; }
.menutab { height: 25px; border: 1px solid transparent; border-bottom: 0; background: #fff; padding: 4px 12px 0; font-size: 12px; color: #333; }
.menutab.active { height: 26px; padding-top: 3px; border-color: #c6c6c6; color: #d24726; }

.ribbon { height: 96px; flex: none; display: flex; border-bottom: 1px solid #c6c6c6; }
.ribbon-group { display: flex; flex-direction: column; margin: 1px 0 6px; padding: 2px 4px 0 3px; border-right: 1px solid #c6c6c6; }
.ribbon-items { display: grid; grid-template-columns: 90px 130px 90px 107px 67px 94px 53px 53px 87px; height: 73px; }
.ribbon-item { border: 0; background: none; display: flex; flex-direction: column; align-items: center; padding-top: 5px; line-height: 15px; color: #2c2c2c; white-space: nowrap; }
.ribbon-item svg { margin-bottom: 4px; }
.ribbon-item.active { background: #f4b899; }
.ribbon-title { text-align: center; color: #777; line-height: 21px; }
.collapse { margin-left: auto; align-self: flex-end; padding: 0 12px 9px; }

.doctabs { height: 28px; flex: none; display: flex; border-bottom: 1px solid #a9a9a9; }
.doctab { display: flex; align-items: center; gap: 7px; width: 184px; height: 28px; padding-left: 9px; border: 1px solid #a9a9a9; border-width: 1px 1px 0 0; background: #fff; }
.doctab span { width: 130px; font-family: Roboto, sans-serif; font-size: 11px; white-space: nowrap; }

.main { flex: 1; min-height: 0; display: flex; padding: 2px 0 0 7px; font-family: Roboto, "Noto Sans", sans-serif; }
.tools { width: 42px; flex: none; }
.tools-title { height: 37px; padding-top: 4px; line-height: 13px; text-align: center; color: #000; }
.toolgroup { display: flex; flex-direction: column; margin-bottom: 9px; }
.tool { height: 42px; margin-bottom: -1px; border: 1px solid #adadad; background: linear-gradient(#f0f0f0, #e4e4e4); display: flex; align-items: center; justify-content: center; }
.tool:last-child { margin-bottom: 0; }
.tool.active { background: linear-gradient(#dcebfb, #c1ddfa); border-color: #7eb4ea; }
.tool.dim svg { opacity: .5; }
.toolgroup:last-child { margin-top: -1px; }

.side { width: 300px; flex: none; margin-left: 6px; display: flex; flex-direction: column; }
.paneltabs { display: flex; align-items: flex-end; height: 26px; margin-bottom: -1px; padding-left: 1px; }
.paneltabs button { height: 24px; border: 1px solid #a0a0a0; border-bottom: 0; background: #fff; margin-right: -1px; color: #333; flex: 0 0 87px; white-space: nowrap; }
.paneltabs button.active { height: 27px; flex-basis: 117px; margin-bottom: -1px; }
.paneltabs button:last-child { flex-basis: 74px; }
.panel { flex: 1; min-height: 0; display: flex; flex-direction: column; border: 1px solid #a0a0a0; padding: 1px 1px 0; }
.search { height: 21px; flex: none; border: 1px solid #7a7a7a; padding: 0 2px; outline: 0; }
.search::placeholder { color: #b4b4b4; opacity: 1; }
.treebox { flex: 1; min-height: 0; display: flex; border: 1px solid #a0a0a0; }
.treecol { flex: 1; min-width: 0; overflow: hidden; }
.treehead { height: 20px; border: 1px solid #a0a0a0; border-top: 0; padding-left: 2px; line-height: 19px; }
.tree { list-style: none; }
.tree li { height: 21px; display: flex; align-items: center; color: #333; white-space: nowrap; padding-right: 2px; overflow: hidden; }
.tree .i16 { margin: 0 4px 0 2px; }
.tree .label { overflow: hidden; }
.guide { width: 21px; height: 21px; flex: none; background: linear-gradient(to bottom, #bbb 50%, transparent 50%) 10px 0 / 1px 2px repeat-y; display: flex; align-items: center; padding-left: 8px; }
.guide.half { height: 11px; align-self: flex-start; }
.guide.branch::after { content: ""; order: 2; flex: 1; border-top: 1px dotted #bbb; }
.guide.half::after { align-self: flex-end; }
.vscroll { width: 17px; flex: none; background: #f0f0f0; display: flex; flex-direction: column; align-items: center; padding: 5px 0; }
.vscroll .thumb { width: 100%; height: 278px; margin: 3px 0 auto; background: #cdcdcd; }
.chev { width: 10px; height: 9px; }
.chev path { fill: none; stroke: #606060; stroke-width: 2; }
.stand { margin-top: 3px; height: 13px; line-height: 13px; background: #f9dace; }
.settings { padding: 16px 6px 3px 4px; }
.settings label { display: block; height: 17px; line-height: 16px; font-size: 12px; color: #000; }
.combo { position: relative; display: flex; height: 19px; margin: 0 2px 6px 0; border: 1px solid #a9a9a9; }
.combo select { flex: 1; appearance: none; border: 0; background: none; padding-left: 2px; color: #333; outline: 0; }
.combo-btn { width: 18px; border-left: 1px solid #a9a9a9; background: #eee; display: flex; align-items: center; justify-content: center; pointer-events: none; }
.hint-title { display: block; height: 16px; line-height: 16px; padding-left: 1px; color: #000; font-size: 12px; }
.settings p { padding-left: 1px; color: #777; }
.project { display: flex; gap: 7px; margin: 7px 0 22px 6px; }
.project button { width: 53px; height: 51px; flex: none; border: 1px solid #adadad; background: #ececec; display: flex; align-items: center; justify-content: center; }
.project b { display: block; color: #003366; line-height: 18px; height: 23px; font-size: 12px; white-space: nowrap; }
.project p { line-height: 13px; color: #000; width: 180px; }

.splitter { width: 9px; flex: none; margin: 278px 0; background: radial-gradient(circle at 1px 1px, #999 1px, transparent 1px) 1px 0 / 4px 4px; }

.plan { width: 784px; flex: none; display: flex; flex-direction: column; font-family: "Open Sans", sans-serif; color: #000; }
.plan-scroll { flex: 1; min-height: 0; overflow: hidden; }
table { width: 100%; table-layout: fixed; border-collapse: separate; border-spacing: 0; font-size: 13px; line-height: 18px; }
.c-nr { width: 55px; }
.c-info { width: 58px; }
.c-a { width: 219px; }
.c-b { width: 216px; }
th { height: 60px; padding: 0; font-weight: 400; border-bottom: 1px solid #c8c8c8; }
.info-head { background: #fde5dd; border-bottom: 2px solid #7c0a36; color: #6e0b35; font-weight: 700; }
.info-head svg { margin: 0 auto 18px; }
td { padding: 0 2px 0 3px; border-right: 1px solid #c8c8c8; border-bottom: 1px solid #d0d0d0; }
td:last-child { border-right: 0; }
.nr { padding: 0 3px 0 18px; }
.group .nr { padding-left: 9px; }
.nr div { display: flex; justify-content: space-between; align-items: center; }
.group td { font-weight: 700; font-size: 12px; }
.group .nr { font-weight: 400; font-size: 13px; }
.low td:nth-child(n+3) { vertical-align: bottom; padding-bottom: 11px; }
.icons { padding: 0 0 0 2px; }
.icons div { display: flex; align-items: center; }
.ra { width: 14px; height: 12px; }
.rn { width: 12px; height: 14px; margin: 0 6px; }
.rl { width: 14px; height: 14px; }
.selected .nr { background: #fde5dd; color: #7c0a36; font-weight: 700; }
.selected td:not(.nr) { background: #e9e9e9; box-shadow: inset 0 2px #7c0a36, inset 0 -2px #7c0a36; }
.selected td.icons { box-shadow: inset 2px 2px #7c0a36, inset 0 -2px #7c0a36; }
.rest { height: 60px; }

.hscroll { height: 18px; flex: none; display: flex; background: #eee; border: 1px solid #a0a0a0; }
.hs-btn { width: 17px; display: flex; align-items: center; justify-content: center; }
.hs-btn.edge { border-right: 2px solid #a0a0a0; }
.hs-thumb { width: 61px; background: #fff; border: 1px solid #a0a0a0; border-width: 0 2px; }
.hs-thumb.small { width: 21px; }
.hs-space { flex: 1; }
.hs-space:nth-last-child(2) { border-right: 2px solid #a0a0a0; }
.hs-gap { width: 31px; border-right: 2px solid #a0a0a0; }

.gantt { flex: 1; min-width: 0; margin-left: 9px; display: flex; flex-direction: column; font-family: "Open Sans", sans-serif; color: #111; }
.gantt-view { position: relative; flex: 1; min-height: 0; overflow: hidden; display: flex; flex-direction: column; border-left: 1px solid #d0d0d0; }
.scale { display: flex; height: 20px; flex: none; border-bottom: 1px solid #d0d0d0; font-size: 13px; line-height: 18px; }
.scale span { flex-grow: 0; flex-shrink: 0; text-align: center; border-right: 1px solid #d0d0d0; white-space: nowrap; overflow: hidden; }
.scale .now { background: #f4b899; }
.scale span:last-child { text-align: left; padding-left: 2px; }
.scale.weeks { border-color: #b0b0b0; font-family: Roboto, sans-serif; font-size: 8px; line-height: 20px; }
.month-tip { position: absolute; z-index: 3; left: 42px; top: 38px; width: 251px; height: 20px; border: 1px solid #d0d0d0; background: #fff; text-align: center; font-size: 13px; line-height: 20px; font-weight: 700; }
.chart { position: relative; z-index: 0; flex: 1; overflow: hidden; }
.stripes { position: absolute; z-index: 1; inset: 0; pointer-events: none; }
.stripe { position: absolute; top: 0; bottom: 0; }
.weekend { background: #ffff84; border-right: 1px solid #d4d4a8; }
.free { background: #f9b8b4; }
.vac { background: #d0d0d0; }
.stripe i { position: absolute; left: 1px; top: 340px; writing-mode: vertical-rl; rotate: 180deg; font-style: normal; font-size: 8px; line-height: 14px; color: #f4f4f4; }
.lane { position: relative; }
.lane::after { content: ""; position: absolute; z-index: 2; left: 0; right: 0; bottom: 0; border-bottom: 1px solid #d0d0d0; }
.lane.selected { background: #e9e9e9; }
.lane.tail { height: 60px; }
.bar { position: absolute; z-index: 3; top: 50%; height: 20px; translate: 0 -50%; border: 1px solid #111; overflow: hidden; }
.bar.green { background: #80ff00; }
.bar.blue { background: #003f7f; }
.bar.red { background: #9c0000; border-color: #600; height: 22px; }
.bar.sum { top: 2px; height: 11px; translate: none; border: 0; background: #000; clip-path: polygon(0 0, 100% 0, 100% 100%, calc(100% - 5px) 6px, 5px 6px, 0 100%); }
.over { position: absolute; top: 0; bottom: 0; margin-left: -1px; }
.over.free { background: #b890a4; }
.over.vac { background: #9caebe; }

.vs { width: 18px; flex: none; margin-bottom: 18px; display: flex; flex-direction: column; background: #eee; border: 1px solid #a0a0a0; border-right-width: 2px; }
.vs-btn { height: 17px; display: flex; align-items: center; justify-content: center; }
.vs-thumb { height: 70px; background: #fff; border: 1px solid #a0a0a0; border-width: 2px 0; }
.vs-space { flex: 1; border-bottom: 2px solid #a0a0a0; }

.status { height: 24px; flex: none; display: flex; align-items: center; padding-left: 2px; background: #d24726; color: #fff; }
.status .off { color: #e8957f; }
.s-caps { width: 35px; }
.s-num { width: 31px; }
.s-scrl { width: 36px; }
.s-ins { width: 27px; }
.s-user { width: 139px; padding-left: 2px; }

.dialog { position: absolute; z-index: 10; left: 481px; top: 182px; width: 829px; border: 1px solid #6c6c6c; background: #f0f0f0; box-shadow: 0 4px 22px rgba(0, 0, 0, .42); color: #000; font: 11px/13px Roboto, "Noto Sans", sans-serif; }
.dlg-top { height: 103px; background: #fff; border-bottom: 1px solid #a0a0a0; }
.dlg-caption { display: flex; align-items: center; gap: 5px; height: 31px; padding: 0 10px 0 8px; font-size: 12px; }
.dlg-caption button { margin-left: auto; }
.dlg-top h2 { padding: 9px 0 0 11px; font-size: 12px; line-height: 14px; }
.dlg-top p { padding: 10px 86px 0 23px; }
.dlg-body { padding: 9px 6px 3px 5px; }
.filter { margin: 0; height: 63px; border: 1px solid #dcdcdc; background: #fff; padding: 3px 6px 0; }
.filter-title { margin-left: -4px; color: #444; height: 19px; }
.fields { display: grid; grid-template-columns: 275px 1fr 113px; gap: 0 6px; }
.fields label { display: block; padding-left: 1px; height: 13px; }
.drop { position: relative; color: #444; }
.drop select { display: block; width: 100%; height: 21px; border: 1px solid #adadad; border-radius: 0; background: #e1e1e1; appearance: none; padding-left: 3px; color: #000; }
.drop svg { position: absolute; right: 4px; top: 8px; pointer-events: none; }
.result { margin-top: 6px; border: 1px solid #828790; height: 405px; padding: 2px 6px 0 7px; }
.result-title { height: 15px; line-height: 14px; margin-left: -5px; }
.result-grid { display: grid; grid-template-columns: 273px 1fr; grid-template-rows: 377px; gap: 7px; }
.map { border: 1px solid #0a2a78; background: linear-gradient(to right, #fff 5%, #d0d0ff); }
.map svg { width: 100%; height: 100%; }
.pane { display: flex; flex-direction: column; min-width: 0; }
.nav { display: flex; gap: 6px; height: 24px; }
.nav button { border: 1px solid #adadad; background: #e1e1e1; }
.navset { display: flex; justify-content: space-between; width: 171px; }
.navbtn { width: 24px; display: flex; align-items: center; justify-content: center; }
.nav .find { width: 80px; }
.list { height: 218px; margin-top: 6px; border: 1px solid #828790; background: #fff; display: flex; padding: 1px; }
.items { flex: 1; overflow: hidden; padding: 0 3px 0 2px; }
.item { height: 48px; padding: 3px 0 0; border-bottom: 2px solid #f0f0f0; }
.item dl, .details dl { display: grid; grid-template-columns: 76px 1fr; line-height: 17px; }
.item dl { border: 3px solid transparent; padding: 0 1px 0 0; height: 40px; grid-template-columns: 73px 1fr; }
.item dt { padding-left: 1px; }
.item.current dl { border-color: #0f72c4; }
.item.current .st { background: #0078d7; color: #fff; margin-right: 2px; }
.vscroll.list-scroll { width: 15px; }
.list-scroll .thumb { height: 16px; margin-top: 13px; }
.details { flex: 1; margin-top: 6px; border: 1px solid #828790; background: #fff; padding: 7px 7px 3px; }
.details dl { grid-template-columns: 46px 1fr; border-bottom: 2px solid #f0f0f0; padding-bottom: 6px; margin: 0 -4px; padding-left: 4px; }
.dlg-foot { border-top: 1px solid #a0a0a0; height: 43px; display: flex; gap: 7px; padding: 9px 8px 0 9px; }
.dlg-foot span { flex: 1; }
.dlg-foot button { width: 73px; height: 24px; border: 1px solid #adadad; background: #e1e1e1; }
</style>
